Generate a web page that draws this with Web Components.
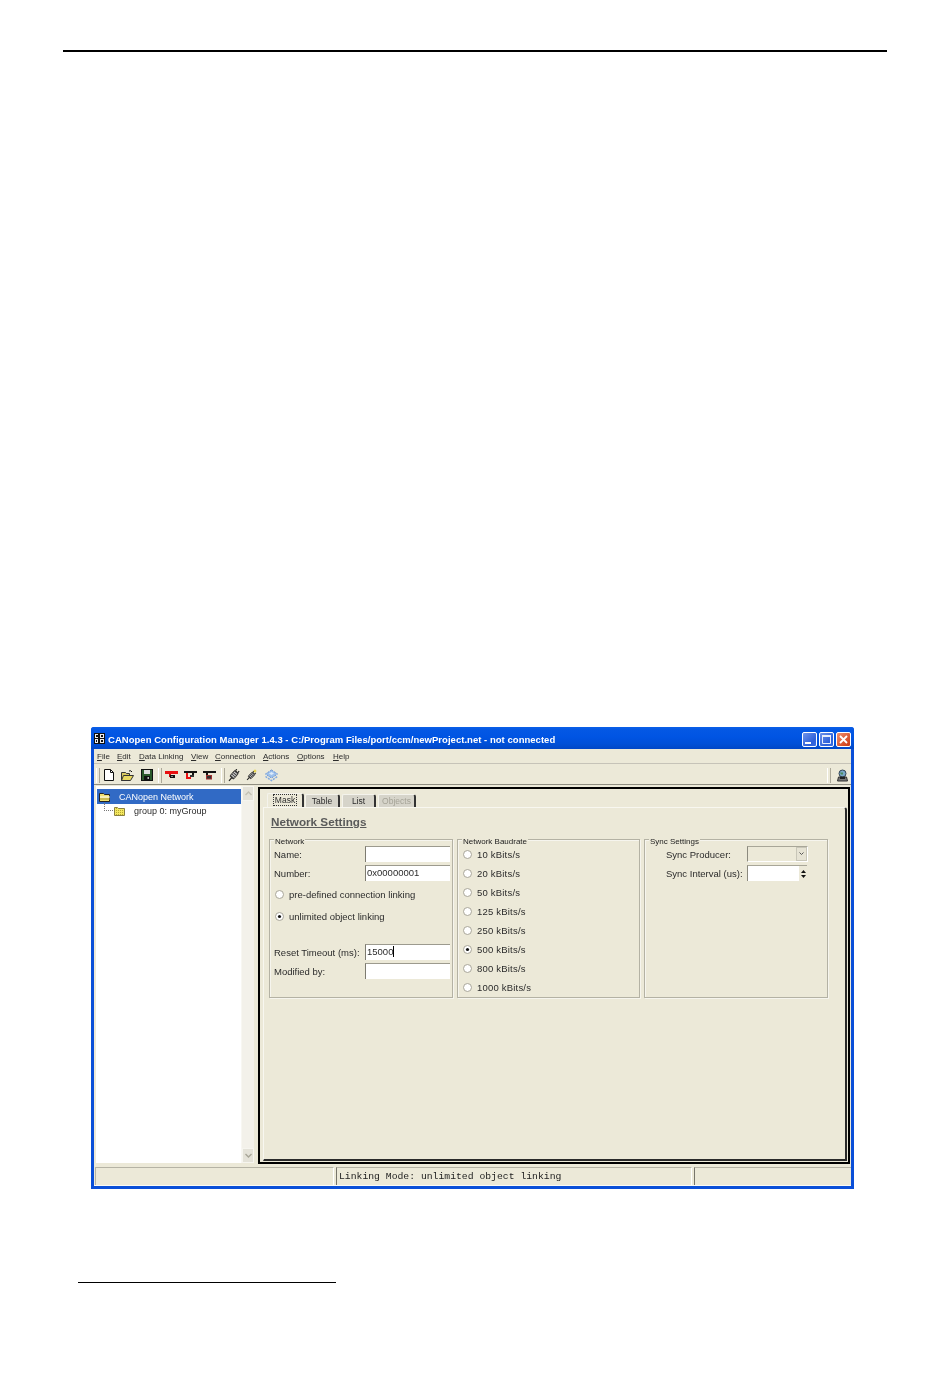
<!DOCTYPE html>
<html>
<head>
<meta charset="utf-8">
<title>CANopen Configuration Manager</title>
<style>
html,body{margin:0;padding:0;background:#fff;}
body{width:950px;height:1398px;overflow:hidden;font-family:"Liberation Sans",Arial,sans-serif;}
</style>
</head>
<body>
<page-sheet>
  <app-window>
    <title-bar slot="title">CANopen Configuration Manager 1.4.3 - C:/Program Files/port/ccm/newProject.net - not connected</title-bar>
    <menu-bar slot="menu"></menu-bar>
    <tool-bar slot="tools"></tool-bar>
    <tree-pane slot="tree"></tree-pane>
    <settings-panel slot="panel">
      <group-box legend="Network">
        <form-row label="Name:"></form-row>
        <form-row label="Number:" value="0x00000001"></form-row>
        <win-radio style="margin-top:2px">pre-defined connection linking</win-radio>
        <win-radio style="margin-top:3px" checked>unlimited object linking</win-radio>
        <form-row style="margin-top:17px" label="Reset Timeout (ms):" value="15000" caret></form-row>
        <form-row label="Modified by:"></form-row>
      </group-box>
      <group-box legend="Network Baudrate" style="letter-spacing:.2px">
        <win-radio>10 kBits/s</win-radio>
        <win-radio>20 kBits/s</win-radio>
        <win-radio>50 kBits/s</win-radio>
        <win-radio>125 kBits/s</win-radio>
        <win-radio>250 kBits/s</win-radio>
        <win-radio checked>500 kBits/s</win-radio>
        <win-radio>800 kBits/s</win-radio>
        <win-radio>1000 kBits/s</win-radio>
      </group-box>
      <group-box legend="Sync Settings">
        <sync-row label="Sync Producer:" kind="combo"></sync-row>
        <sync-row label="Sync Interval (us):" kind="spin"></sync-row>
      </group-box>
    </settings-panel>
    <status-bar slot="status">Linking Mode: unlimited object linking</status-bar>
  </app-window>
</page-sheet>

<script>
// small helper, every element just renders its markup once
class Base extends HTMLElement{
    constructor(){
        super();
        this.attachShadow({mode:'open'});
    }
    connectedCallback(){
        this.render();
    }
}

class PageSheet extends Base{
    render(){
        this.shadowRoot.innerHTML=`
        <style>
        :host{display:block;width:950px;height:1398px;box-sizing:border-box;padding-top:50px;}
        .rule{height:2px;background:#000;width:824px;margin-left:63px;}
        .win{margin:675px 0 0 91px;}
        .note{height:1px;background:#000;width:258px;margin:93px 0 0 78px;}
        </style>
        <div class="rule"></div>
        <div class="win"><slot></slot></div>
        <div class="note"></div>
        `;
    }
}

class AppWindow extends Base{
    render(){
        this.shadowRoot.innerHTML=`
        <style>
        :host{display:flex;flex-direction:column;width:763px;height:462px;box-sizing:border-box;
            background:#0a4fd8;border-radius:3px 3px 0 0;filter:blur(.3px);
            font:9.5px "Liberation Sans",Arial,sans-serif;color:#2b2b2b;}
        .body{flex:1;margin:0 3px 3px;background:#ece9d8;display:flex;flex-direction:column;min-height:0;}
        .main{height:379px;margin-top:1px;display:flex;padding-left:2px;}
        </style>
        <slot name="title"></slot>
        <div class="body">
            <slot name="menu"></slot>
            <slot name="tools"></slot>
            <div class="main">
                <slot name="tree"></slot>
                <slot name="panel"></slot>
            </div>
            <slot name="status"></slot>
        </div>
        `;
    }
}

class TitleBar extends Base{
    render(){
        this.shadowRoot.innerHTML=`
        <style>
        :host{display:flex;align-items:center;height:22px;box-sizing:border-box;padding:3px 3px 0 3px;
            background:linear-gradient(#0a5fe8 0,#0458e4 12%,#0054e3 45%,#0050d8 75%,#0047c6 100%);
            color:#fff;font:bold 9.5px "Liberation Sans",Arial,sans-serif;letter-spacing:.03px;border-radius:3px 3px 0 0;}
        .logo{width:11px;height:11px;margin-right:3px;flex:none;margin-top:-2px;}
        .txt{flex:1;white-space:nowrap;}
        .btns{display:flex;gap:2px;}
        .b{width:15px;height:15px;box-sizing:border-box;border:1px solid #fff;border-radius:2px;
            background:linear-gradient(135deg,#6f93ea,#2c5fd9 70%,#3a6ee4);}
        .b svg{display:block;width:13px;height:13px;}
        .x{background:linear-gradient(135deg,#ee9070,#d6502a 70%,#c53c18);}
        </style>
        <svg class="logo" viewBox="0 0 11 11"><rect width="11" height="11" fill="#111"/><path d="M1 1h3v1H2v2h2v1H1zM1 6h3v4H1zM6 1h4v4H6zM6 6h4v4H6z" fill="#eee"/><path d="M2 7h1v2H2zM7 2h2v2H7zM7 7h2v2H7z" fill="#111"/></svg>
        <span class="txt"><slot></slot></span>
        <div class="btns">
            <div class="b"><svg viewBox="0 0 13 13"><rect x="2" y="9" width="6" height="2" fill="#fff"/></svg></div>
            <div class="b"><svg viewBox="0 0 13 13"><path d="M2.5 2.5h8v8h-8z" fill="none" stroke="#e8eefc"/><rect x="2" y="2" width="9" height="2" fill="#e8eefc"/></svg></div>
            <div class="b x"><svg viewBox="0 0 13 13"><path d="M3 3l7 7M10 3l-7 7" stroke="#fff" stroke-width="1.8"/></svg></div>
        </div>
        `;
    }
}

class MenuBar extends Base{
    render(){
        const items=[['File',20],['Edit',22],['Data Linking',52],['View',24],['Connection',48],['Actions',34],['Options',36],['Help',16]];
        this.shadowRoot.innerHTML=`
        <style>
        :host{display:flex;height:14px;align-items:center;padding:0 0 0 3px;border-bottom:1px solid #c6c3b8;box-sizing:content-box;}
        span{white-space:nowrap;font-size:8px;}
        span::first-letter{text-decoration:underline;}
        </style>
        ${items.map(i=>`<span style="width:${i[1]}px">${i[0]}</span>`).join('')}
        `;
    }
}

class ToolBar extends Base{
    render(){
        const plug=`<rect x="-2.500" y="-5" width="5" height="8" rx="1.500" fill="#444" stroke="#111" stroke-width=".6"/>
            <path d="M-2 -3h4M-2 -1h4M-2 1h4" stroke="#ddd"/>
            <path d="M0 3v4M-1.500 -5v-2M1.500 -5v-2" stroke="#222" stroke-width="1.200"/>`;
        this.shadowRoot.innerHTML=`
        <style>
        :host{display:flex;align-items:center;height:21px;box-sizing:border-box;border-bottom:1px solid #8f8d80;padding:2px 0 0 2px;}
        .grip{width:2px;height:15px;border-left:1px solid #fff;border-right:1px solid #aca899;flex:none;}
        svg{display:block;flex:none;}
        .sp{flex:1;}
        </style>
        <div class="grip" style="margin-right:4px"></div>
        <svg width="10" height="12" viewBox="0 0 10 12" style="margin-right:7px"><path d="M.5.5h6l3 3v8h-9z" fill="#fff" stroke="#111"/><path d="M6.5.5v3h3" fill="none" stroke="#111"/></svg>
        <svg width="13" height="11" viewBox="0 0 13 11" style="margin-right:7px"><path d="M.5 10.500v-8h4l1 1h3v7z" fill="#d8c860" stroke="#333"/><path d="M.5 10.500l2-5h10l-3 5z" fill="#e8d860" stroke="#333"/><path d="M8 1q2-1 3 1" fill="none" stroke="#111"/></svg>
        <svg width="12" height="12" viewBox="0 0 12 12" style="margin-right:5px"><rect x=".5" y=".5" width="11" height="11" fill="#2c5a2c" stroke="#111"/><rect x="3" y="1" width="6" height="4" fill="#ddd"/><rect x="3" y="7" width="6" height="4" fill="#111"/><rect x="6.500" y="8" width="1.500" height="2" fill="#bbb"/></svg>
        <div class="grip" style="margin-right:3px"></div>
        <svg width="13" height="10" viewBox="0 0 13 10" style="margin-right:6px"><rect y="1" width="13" height="3" fill="#e81010"/><rect x="4" y="4" width="2" height="3" fill="#c01010"/><rect x="5" y="5" width="5" height="3" fill="#111"/><rect x="6" y="6" width="2" height="1" fill="#888"/></svg>
        <svg width="13" height="10" viewBox="0 0 13 10" style="margin-right:6px"><rect y="1" width="13" height="2" fill="#111"/><rect x="8" y="3" width="2" height="3" fill="#111"/><rect x="2" y="3" width="2" height="6" fill="#e81010"/><rect x="2" y="7" width="5" height="2" fill="#e81010"/><rect x="6" y="5" width="4" height="2" fill="#333"/></svg>
        <svg width="13" height="10" viewBox="0 0 13 10" style="margin-right:5px"><rect y="1" width="13" height="2" fill="#111"/><rect x="3" y="3" width="2" height="3" fill="#111"/><rect x="3.500" y="5.500" width="5" height="3.500" fill="#333" stroke="#a03030"/></svg>
        <div class="grip" style="margin-right:2px"></div>
        <svg width="13" height="13" viewBox="0 0 13 13" style="margin-right:6px"><g transform="translate(6.500 6.500) rotate(40)">${plug}</g></svg>
        <svg width="11" height="12" viewBox="0 0 11 12" style="margin-right:8px"><g transform="translate(5 7) rotate(45) scale(.8)">${plug}</g><path d="M9 0l.6 1.400L11 2l-1.400.6L9 4l-.6-1.400L7 2l1.400-.6z" fill="#e8d020"/></svg>
        <svg width="13" height="13" viewBox="0 0 13 13"><path d="M6.500 1l6 4-6 4-6-4z" fill="#9cc0ec" stroke="#6a94d4" stroke-dasharray="2 1"/><path d="M.5 7.500l6 4 6-4" fill="none" stroke="#7fa8e0" stroke-width="1.500" stroke-dasharray="2 1"/><path d="M4 4.500l2.500-1.500 2.500 1.500-2.500 1.500z" fill="#dceafa"/></svg>
        <div class="sp"></div>
        <div class="grip" style="margin-right:5px"></div>
        <svg width="13" height="13" viewBox="0 0 13 13" style="margin-right:2px"><circle cx="6.500" cy="4.500" r="3.500" fill="#7aa8c8" stroke="#345"/><path d="M4 3.500h3v2H5z" fill="#4c8c5c"/><path d="M1.500 12l1-4h8l1 4z" fill="#777" stroke="#333"/><rect x="4" y="8" width="5" height="2" fill="#222"/></svg>
        `;
    }
}

class TreePane extends Base{
    render(){
        this.shadowRoot.innerHTML=`
        <style>
        :host{display:flex;width:158px;height:377px;box-sizing:border-box;font-size:9px;}
        .list{width:145px;background:#fff;padding:3px 0 0 1px;box-sizing:border-box;}
        .sel{height:15px;background:#316ac5;color:#fff;display:flex;align-items:center;}
        .sel svg{margin:0 8px 0 2px;}
        .node{height:14px;display:flex;align-items:center;}
        .dots{width:9px;height:8px;margin:-8px 1px 0 7px;border-left:1px dotted #777;border-bottom:1px dotted #777;box-sizing:border-box;}
        .node svg{margin-right:9px;}
        .bar{width:13px;background:#f3f1ea;display:flex;flex-direction:column;justify-content:space-between;border-left:1px solid #f8f7f2;box-sizing:border-box;}
        .btn{height:15px;background:#e4e2d8;border:1px solid #f6f5ef;box-sizing:border-box;}
        .btn svg{display:block;margin:4px auto 0;}
        </style>
        <div class="list">
            <div class="sel">
                <svg width="12" height="10" viewBox="0 0 12 10"><path d="M.5 9.500v-8h4l1 1h5v7z" fill="#f0e070" stroke="#222"/><path d="M1 5h10" stroke="#fff"/><path d="M1 7h10" stroke="#a89830"/></svg>
                <span>CANopen Network</span>
            </div>
            <div class="node">
                <div class="dots"></div>
                <svg width="11" height="10" viewBox="0 0 11 10"><defs><pattern id="h" width="2" height="2" patternUnits="userSpaceOnUse"><rect width="2" height="2" fill="#f4e860"/><rect width="1" height="1" fill="#b8a830"/></pattern></defs><path d="M.5 9.500v-8h3l1 1h6v7z" fill="url(#h)" stroke="#8a8040"/></svg>
                <span>group 0: myGroup</span>
            </div>
        </div>
        <div class="bar">
            <div class="btn"><svg width="7" height="5" viewBox="0 0 7 5"><path d="M.5 4l3-3 3 3" fill="none" stroke="#c3c1b4" stroke-width="1.400"/></svg></div>
            <div class="btn"><svg width="7" height="5" viewBox="0 0 7 5"><path d="M.5 1l3 3 3-3" fill="none" stroke="#a8a698" stroke-width="1.400"/></svg></div>
        </div>
        `;
    }
}

class SettingsPanel extends Base{
    render(){
        this.shadowRoot.innerHTML=`
        <style>
        :host{display:flex;flex-direction:column;width:592px;height:377px;margin:1px 1px 0 4px;box-sizing:border-box;
            border:2px solid #000;padding:4px 1px 1px 3px;}
        .tabs{display:flex;height:14px;padding-left:4px;align-items:flex-end;}
        .tab{height:13px;box-sizing:border-box;background:#d6d4ca;border-top:1px solid #f4f3ec;border-left:1px solid #f4f3ec;
            border-right:2px solid #333;border-radius:2px 3px 0 0;text-align:center;font-size:8.500px;line-height:12px;}
        .on{height:14px;background:#ece9d8;}
        .on span{outline:1px dotted #333;padding:0 1px;}
        .off{color:#a5a397;}
        .page{flex:1;box-sizing:border-box;border-top:1px solid #f8f7f0;border-left:1px solid #f8f7f0;
            border-right:2px solid #2a2a2a;border-bottom:2px solid #2a2a2a;border-radius:0 3px 0 0;padding:7px 17px 0 5px;}
        h2{margin:0 0 3px 2px;height:15px;font:bold 11.700px/14px "Liberation Sans",Arial,sans-serif;color:#5a5a5a;
            text-decoration:underline;text-underline-offset:1px;white-space:nowrap;}
        .groups{display:grid;grid-template-columns:184px 183px 184px;gap:4px;margin-top:9px;height:157px;}
        </style>
        <div class="tabs">
            <div class="tab on" style="width:37px"><span>Mask</span></div>
            <div class="tab" style="margin-left:1px;width:35px">Table</div>
            <div class="tab" style="margin-left:2px;width:34px">List</div>
            <div class="tab off" style="margin-left:2px;width:38px">Objects</div>
        </div>
        <div class="page">
            <h2>Network Settings</h2>
            <div class="groups"><slot></slot></div>
        </div>
        `;
    }
}

class GroupBox extends Base{
    render(){
        this.shadowRoot.innerHTML=`
        <style>
        :host{display:block;position:relative;box-sizing:border-box;border:1px solid #b4b2a4;box-shadow:inset 1px 1px 0 #f6f5ee,1px 1px 0 #f6f5ee;padding:5px 0 0 4px;}
        .lg{position:absolute;top:-3px;left:4px;background:#ece9d8;padding:0 1px;font-size:8px;line-height:9px;white-space:nowrap;color:#222;letter-spacing:0;}
        </style>
        <span class="lg">${this.getAttribute('legend')}</span>
        <slot></slot>
        `;
    }
}

class FormRow extends Base{
    render(){
        const v=this.getAttribute('value')||'';
        const caret=this.hasAttribute('caret')?'<i></i>':'';
        this.shadowRoot.innerHTML=`
        <style>
        :host{display:grid;grid-template-columns:91px 85px;height:19px;align-items:center;white-space:nowrap;}
        .in{height:16px;box-sizing:border-box;background:#fff;border-left:1px solid #7d7b70;border-top:1px solid #9c9a8e;
            padding-left:1px;line-height:14px;white-space:nowrap;margin-top:-1px;}
        i{display:inline-block;width:1px;height:11px;background:#000;vertical-align:-2px;}
        </style>
        <span>${this.getAttribute('label')}</span>
        <div class="in">${v}${caret}</div>
        `;
    }
}

class WinRadio extends Base{
    render(){
        this.shadowRoot.innerHTML=`
        <style>
        :host{display:flex;height:19px;align-items:center;margin-left:1px;white-space:nowrap;}
        svg{margin-right:5px;flex:none;}
        </style>
        <svg width="9" height="9" viewBox="0 0 9 9"><circle cx="4.500" cy="4.500" r="4" fill="#fff" stroke="#a8a698"/>${this.hasAttribute('checked')?'<circle cx="4.500" cy="4.500" r="1.600" fill="#111"/>':''}</svg>
        <slot></slot>
        `;
    }
}

class SyncRow extends Base{
    render(){
        const combo=this.getAttribute('kind')=='combo';
        this.shadowRoot.innerHTML=`
        <style>
        :host{display:grid;grid-template-columns:81px 60px;height:19px;align-items:center;margin-left:17px;white-space:nowrap;}
        .in{height:16px;box-sizing:border-box;border-left:1px solid #8c8a7e;border-top:1px solid #a8a698;margin-top:-1px;display:flex;justify-content:flex-end;}
        .combo{background:#ece9d8;border-right:1px solid #fff;border-bottom:1px solid #fff;width:61px;}
        .spin{background:#fff;}
        .arrow{width:11px;background:#e6e3d4;border:1px solid #c8c6b8;box-sizing:border-box;}
        .arrow svg{display:block;margin:4px auto 0;}
        .updown{width:8px;background:#ece9d8;display:flex;flex-direction:column;justify-content:center;gap:2px;align-items:center;}
        </style>
        <span>${this.getAttribute('label')}</span>
        ${combo
            ?'<div class="in combo"><div class="arrow"><svg width="5" height="4" viewBox="0 0 5 4"><path d="M.5 .5l2 2 2-2" fill="none" stroke="#555"/></svg></div></div>'
            :'<div class="in spin"><div class="updown"><svg width="5" height="3" viewBox="0 0 5 3"><path d="M2.500 0l2.500 3H0z" fill="#111"/></svg><svg width="5" height="3" viewBox="0 0 5 3"><path d="M0 0h5L2.500 3z" fill="#111"/></svg></div></div>'}
        `;
    }
}

class StatusBar extends Base{
    render(){
        this.shadowRoot.innerHTML=`
        <style>
        :host{display:grid;grid-template-columns:241px 358px 1fr;height:19px;margin-top:2px;padding:0 0 1px 1px;box-sizing:border-box;border-bottom:1px solid #fbfaf4;}
        div{border-top:1px solid #b5b3a5;border-left:1px solid #b5b3a5;border-right:1px solid #fff;margin-right:2px;box-sizing:border-box;}
        .mid{border-left-color:#77756a;font:9.750px/17px "Liberation Mono","Courier New",monospace;padding-left:2px;color:#222;white-space:nowrap;}
        </style>
        <div></div>
        <div class="mid"><slot></slot></div>
        <div style="border-left-color:#77756a;margin-right:0;border-right:0"></div>
        `;
    }
}

customElements.define('page-sheet',PageSheet);
customElements.define('app-window',AppWindow);
customElements.define('title-bar',TitleBar);
customElements.define('menu-bar',MenuBar);
customElements.define('tool-bar',ToolBar);
customElements.define('tree-pane',TreePane);
customElements.define('settings-panel',SettingsPanel);
customElements.define('group-box',GroupBox);
customElements.define('form-row',FormRow);
customElements.define('win-radio',WinRadio);
customElements.define('sync-row',SyncRow);
customElements.define('status-bar',StatusBar);
</script>
</body>
</html>
